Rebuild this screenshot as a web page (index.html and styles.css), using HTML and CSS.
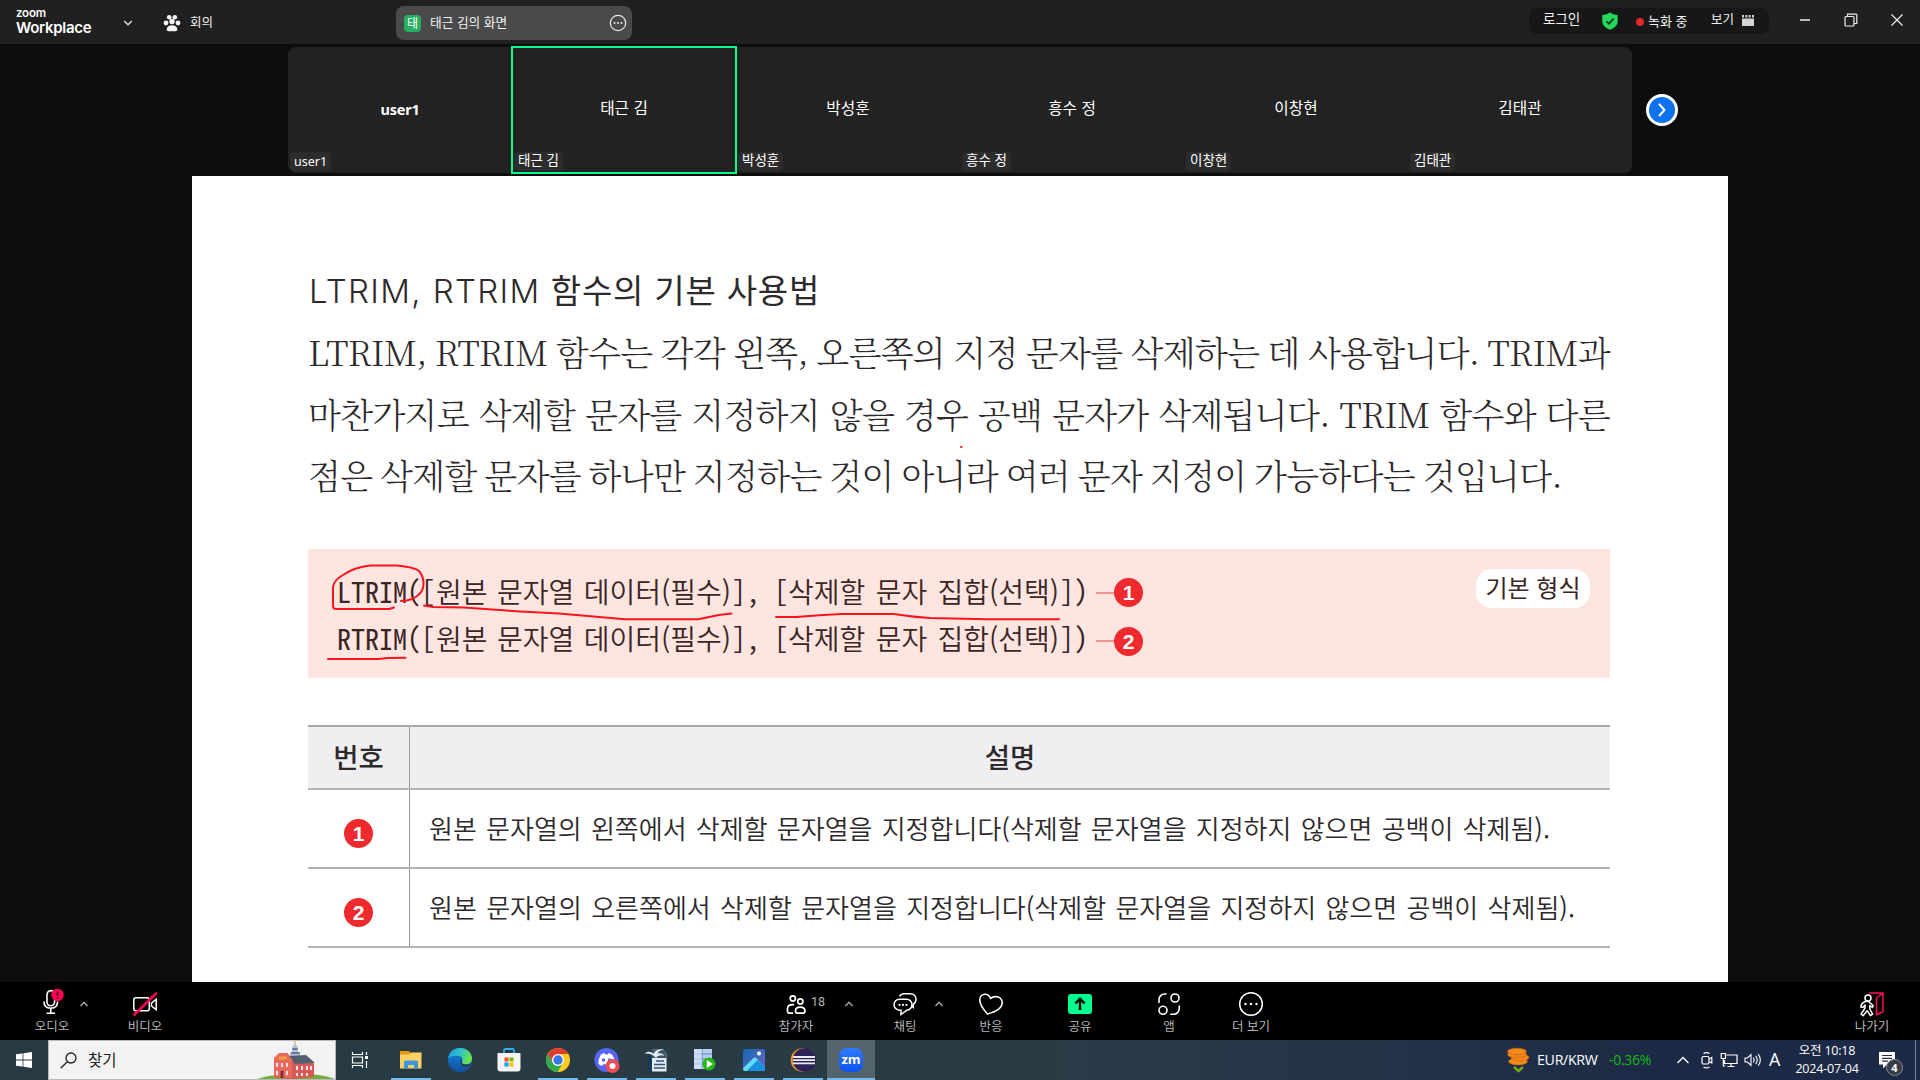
FILE: index.html
```html
<!DOCTYPE html>
<html lang="ko">
<head>
<meta charset="utf-8">
<title>Zoom Workplace</title>
<link rel="stylesheet" href="styles.css">
</head>
<body>
<div class="app">
  <header class="topbar">
    <div class="brand"><span class="brand-zoom">zoom</span><span class="brand-name">Workplace</span></div>
    <svg class="brand-caret" width="10" height="8" viewBox="0 0 10 8"><path d="M1.2 2l3.8 3.8L8.800 2" fill="none" stroke="#e4e4e4" stroke-width="1.4"/></svg>
    <svg class="paw" width="18" height="18" viewBox="0 0 18 18" fill="#f4f4f4"><circle cx="6.200" cy="3.200" r="2.300"/><circle cx="11.800" cy="3.200" r="2.300"/><circle cx="3" cy="9" r="2.400"/><circle cx="15" cy="9" r="2.400"/><circle cx="9" cy="7.500" r="2.700"/><path d="M3.700 15.500c0-2.500 2-4.300 5.300-4.300s5.300 1.800 5.300 4.300c0 1.200-.8 1.700-1.800 1.700h-7c-1 0-1.800-.5-1.800-1.700z"/></svg>
    <span class="top-label meeting">회의</span>
    <div class="share-tab">
      <span class="share-badge">태</span>
      <span class="top-label">태근 김의 화면</span>
      <svg class="share-more" width="18" height="18" viewBox="0 0 18 18"><circle cx="9" cy="9" r="7.700" fill="none" stroke="#e8e8e8" stroke-width="1.200"/><g fill="#e8e8e8"><circle cx="5.500" cy="9" r="1"/><circle cx="9" cy="9" r="1"/><circle cx="12.500" cy="9" r="1"/></g></svg>
    </div>
    <div class="status">
      <span class="top-label login">로그인</span>
      <svg class="shield" width="16" height="18" viewBox="0 0 16 18"><path d="M8 .3c2 1.800 4.600 2.500 7.700 2.700v6c0 4.300-3 7-7.700 8.700C3.300 16 .3 13.300.3 9V3C3.400 2.800 6 2.100 8 .3z" fill="#23d959"/><path d="M4.500 9.300l2.500 2.400 4.600-5" fill="none" stroke="#12331c" stroke-width="1.700"/></svg>
      <span class="rec-dot"></span>
      <span class="top-label rec">녹화 중</span>
      <span class="top-label view">보기</span>
      <svg class="view-icon" width="12" height="12" viewBox="0 0 12 12" fill="#d4d4d4"><path d="M0 0h2v2.500H0zM3.300 0h2v2.500H3.300zM6.600 0h2v2.500H6.600zM10 0h2v2.500H10zM0 3.500h12V11H0z"/></svg>
    </div>
    <div class="win">
      <svg width="12" height="14" viewBox="0 0 12 14"><path d="M1 7h10" stroke="#bbb" stroke-width="2"/></svg>
      <svg width="14" height="14" viewBox="0 0 14 14" fill="none" stroke="#eee" stroke-width="1.200"><rect x="1" y="3.500" width="9" height="9.500" rx="1"/><path d="M3.500 3.500V1.200H12a.8.800 0 0 1 .8.800v8.500H10"/></svg>
      <svg width="14" height="14" viewBox="0 0 14 14"><path d="M1.500 1.500l11 11M12.500 1.500l-11 11" stroke="#eee" stroke-width="1.200"/></svg>
    </div>
  </header>

  <section class="stage">
    <div class="gallery">
      <div class="tile"><b class="name latin">user1</b><span class="tag latin-tag">user1</span></div>
      <div class="tile active"><b class="name">태근 김</b><span class="tag">태근 김</span></div>
      <div class="tile"><b class="name">박성훈</b><span class="tag">박성훈</span></div>
      <div class="tile"><b class="name">흥수 정</b><span class="tag">흥수 정</span></div>
      <div class="tile"><b class="name">이창현</b><span class="tag">이창현</span></div>
      <div class="tile"><b class="name">김태관</b><span class="tag">김태관</span></div>
    </div>
    <div class="next"><svg width="12" height="20" viewBox="0 0 12 20"><path d="M3 4l5.500 6L3 16" fill="none" stroke="#fff" stroke-width="2"/></svg></div>
  </section>

  <main class="slide">
    <h1 class="title"><span class="thin">LTRIM, RTRIM</span> 함수의 기본 사용법</h1>
    <div class="para">
      <p>LTRIM, RTRIM 함수는 각각 왼쪽, 오른쪽의 지정 문자를 삭제하는 데 사용합니다. TRIM과</p>
      <p>마찬가지로 삭제할 문자를 지정하지 않을 경우 공백 문자가 삭제됩니다. TRIM 함수와 다른</p>
      <p class="short">점은 삭제할 문자를 하나만 지정하는 것이 아니라 여러 문자 지정이 가능하다는 것입니다.</p>
    </div>
    <div class="syntax">
      <div class="lines">
        <div class="code"><span class="mono fn">LTRIM</span><span class="mono">([</span><span class="arg first">원본 문자열 데이터(필수)</span><span class="mono sep">], [</span><span class="arg second">삭제할 문자 집합(선택)</span><span class="mono">])</span><i class="dash"></i><span class="num">1</span></div>
        <div class="code lower"><span class="mono fn">RTRIM</span><span class="mono">([</span><span class="arg first">원본 문자열 데이터(필수)</span><span class="mono sep">], [</span><span class="arg second">삭제할 문자 집합(선택)</span><span class="mono">])</span><i class="dash"></i><span class="num">2</span></div>
      </div>
      <span class="form">기본 형식</span>
    </div>
    <div class="table">
      <div class="row head"><div class="c1">번호</div><div class="c2">설명</div></div>
      <div class="row"><div class="c1"><span class="num">1</span></div><div class="c2"><p class="desc1">원본 문자열의 왼쪽에서 삭제할 문자열을 지정합니다(삭제할 문자열을 지정하지 않으면 공백이 삭제됨).</p></div></div>
      <div class="row"><div class="c1"><span class="num">2</span></div><div class="c2"><p class="desc2">원본 문자열의 오른쪽에서 삭제할 문자열을 지정합니다(삭제할 문자열을 지정하지 않으면 공백이 삭제됨).</p></div></div>
    </div>
    <svg class="ink" width="1536" height="806" viewBox="192 176 1536 806" fill="none" stroke="#fb1420" stroke-width="2" stroke-linecap="round" stroke-linejoin="round">
      <path d="M394 607.500L389 609H336Q333 609 333 606V587Q334 580 343 575Q355 567 370 565.500H397Q414 567 419 571Q424 577 423.500 585Q423 594 412 599Q407 601 401 601"/>
      <path d="M424 605.500L433 607L464 607.500L520 611.500L559 613.500L625 619.300H698L719 615L731.500 613.500"/>
      <path d="M776 617H796Q820 615 841 614H894Q912 617 930 618L987 619.300H1059"/>
      <path d="M328 659H378L388 658L405.500 657.700"/>
      <path d="M961 447h.5"/>
    </svg>
  </main>

  <nav class="toolbar">
    <div class="tool audio"><svg width="28" height="28" viewBox="0 0 28 28"><g fill="none" stroke="#fff" stroke-width="1.600"><path d="M15 4.500a3.700 3.700 0 0 0-6 2.500v8a3.800 3.800 0 0 0 7.600 0v-2.500M6 14.500c0 4.300 2.800 6.700 6.800 6.700s6.800-2.400 6.800-6.700M12.800 21v5M8.500 26.200h8.600"/></g><circle cx="19.500" cy="8" r="6.200" fill="#ff0055"/><path d="M19.500 4.500v4.300M19.500 10.300v1.500" stroke="#33000f" stroke-width="1.700"/></svg><span>오디오</span></div>
    <svg class="caret c-audio" width="16" height="10" viewBox="0 0 16 10"><path d="M4.500 7L8 3.300 11.500 7" fill="none" stroke="#a5a5a5" stroke-width="1.500"/></svg>
    <div class="tool video"><svg width="28" height="28" viewBox="0 0 28 28"><g fill="none" stroke="#fff" stroke-width="1.500"><rect x="2.800" y="7.800" width="15.500" height="13" rx="2"/><path d="M20.500 13l4.700-3.700v10.500L20.500 16z"/></g><path d="M3.500 24.500L25 3.500" stroke="#ff0055" stroke-width="2.600" stroke-linecap="round"/></svg><span>비디오</span></div>
    <div class="tool people"><svg width="28" height="28" viewBox="0 0 28 28" fill="none" stroke="#fff" stroke-width="1.700"><circle cx="10.800" cy="8.500" r="2.600"/><circle cx="18.300" cy="11.500" r="2.600"/><path d="M11 23.200H7c-1 0-1.500-.6-1.500-1.600v-3c0-2.400 1.800-4 5.200-4h1.500M13.500 21c0-2.500 1.800-3.800 4.700-3.800s4.700 1.300 4.700 3.800c0 1.400-.6 2.200-1.800 2.200h-5.800c-1.200 0-1.800-.8-1.800-2.200z"/></svg><span>참가자</span><em>18</em></div>
    <svg class="caret c-people" width="16" height="10" viewBox="0 0 16 10"><path d="M4.500 7L8 3.300 11.500 7" fill="none" stroke="#a5a5a5" stroke-width="1.500"/></svg>
    <div class="tool chat"><svg width="28" height="28" viewBox="0 0 28 28" fill="none" stroke="#fff" stroke-width="1.500"><path d="M8.500 6.500c1-1.800 2.500-2.800 4.500-2.800h6.500c3 0 5.500 2.500 5.500 5.500 0 2.500-1 3.800-2.700 4.900v3.400l-1.800-1.500"/><path d="M8.500 9.200h6.800a5.500 5.500 0 0 1 .4 11L10 24.500v-4.300H8.500a5.500 5.500 0 0 1 0-11z"/><path d="M7.500 14.800h2M11 14.800h2M14.500 14.800h2" stroke-width="1.800"/></svg><span>채팅</span></div>
    <svg class="caret c-chat" width="16" height="10" viewBox="0 0 16 10"><path d="M4.500 7L8 3.300 11.500 7" fill="none" stroke="#a5a5a5" stroke-width="1.500"/></svg>
    <div class="tool react"><svg width="28" height="28" viewBox="0 0 28 28" fill="none" stroke="#fff" stroke-width="1.600" stroke-linejoin="round"><path d="M10.500 24C5.500 18.500 2.800 14.500 2.800 10c0-3.500 2.200-5.800 5.200-5.800 2.700 0 4.600 1.500 5.500 4.200 1.500-1.300 3.200-1.800 5-1.800 4 0 6.700 2.500 6.700 6 0 6-6.200 9.200-14.700 11.400z"/></svg><span>반응</span></div>
    <div class="tool share"><svg width="28" height="28" viewBox="0 0 28 28"><rect x="2" y="4" width="24" height="20" rx="3" fill="#00ff8c"/><path d="M14 20V9M9.300 13.500L14 8.800l4.700 4.700" fill="none" stroke="#000" stroke-width="2.400"/></svg><span>공유</span></div>
    <div class="tool apps"><svg width="28" height="28" viewBox="0 0 28 28" fill="none" stroke="#fff" stroke-width="1.600"><circle cx="20" cy="8" r="4"/><circle cx="8" cy="20.300" r="4"/><path d="M11.500 4H9.500a5.500 5.500 0 0 0-5.500 5.500V13M24.200 15.500v3.300a5.500 5.500 0 0 1-5.500 5.500h-3.500"/></svg><span>앱</span></div>
    <div class="tool more"><svg width="28" height="28" viewBox="0 0 28 28"><circle cx="14" cy="14" r="11.300" fill="none" stroke="#fff" stroke-width="1.500"/><g fill="#fff"><circle cx="8.500" cy="14" r="1.200"/><circle cx="14" cy="14" r="1.200"/><circle cx="19.500" cy="14" r="1.200"/></g></svg><span>더 보기</span></div>
    <div class="tool exit"><svg width="28" height="28" viewBox="0 0 28 28" fill="none" stroke-linejoin="round"><path d="M11 3h14.500M18.500 8l6.500-5v18.500l-6.500 3.500z" stroke="#ff0a58" stroke-width="1.500"/><g stroke="#fff" stroke-width="1.500"><circle cx="10" cy="8" r="3"/><path d="M7 11.500c-2 1-4 3-4.200 5.500l2.300.3 2-2.300-.3 3.500-3.800 5.500 2 1.700 4.200-5 3.200 5 2.200-1.500-2.800-5.200v-3.500l2.500 2 1-1.800-3-2.700c-1-1.500-3-2.300-5.300-1.500z"/></g></svg><span>나가기</span></div>
  </nav>

  <footer class="taskbar">
    <div class="start"><svg width="16" height="16" viewBox="0 0 16 16" fill="#fff"><path d="M0 2.300l6.600-.9v6.200H0zM7.400 1.300L16 0v7.600H7.400zM0 8.400h6.600v6.200L0 13.700zM7.400 8.400H16V16l-8.600-1.200z"/></svg></div>
    <div class="search">
      <svg width="17" height="17" viewBox="0 0 17 17" fill="none" stroke="#222" stroke-width="1.300"><circle cx="11" cy="6" r="5"/><path d="M7.300 9.700L.7 16.200"/></svg>
      <span>찾기</span>
      <svg class="hall" width="78" height="38" viewBox="0 0 78 38"><path d="M0 38C12 34 24 33 40 33s28 1 38 5z" fill="#76ad3e"/><path d="M33 18V12h2V7l3-5 3 5v5h2v6z" fill="#aebed3"/><path d="M35.500 8h5M34 12h9" stroke="#53637c" stroke-width="1.500"/><path d="M38 0v3" stroke="#d4aa3b"/><path d="M18 17l5-5h7l4 4 20 3 3 4v13l-22 2-17-1z" fill="#d95a55"/><path d="M32 15l17-1 9 8-20 1z" fill="#555d70"/><path d="M17 17l5-5h7l6 6v19l-18-1z" fill="#e96a5d"/><path d="M22 17h8" stroke="#f0a243" stroke-width="3"/><path d="M20 22v4M25 22v4M30 22v4M20 30v4M30 30v4M40 25v4M45 25v4M50 25v4M54 25v4M40 32v3M45 32v3M50 32v3" stroke="#e9e3e8" stroke-width="2"/><path d="M25 30v7" stroke="#7c2f35" stroke-width="3"/></svg>
    </div>
    <div class="app-cell taskview"><svg width="18" height="18" viewBox="0 0 18 18" fill="none" stroke="#fff" stroke-width="1.200"><path d="M1.500 1v2.500h10V1M1.500 17v-2.500h10V17M1.500 6h10v6h-10zM15.500 1v3M15.500 10v7"/><path d="M15.500 5v3" stroke-width="3"/></svg></div>
    <div class="app-cell open"><svg width="24" height="24" viewBox="0 0 24 24"><path d="M1 3h9l1.500 2H22v15H1z" fill="#e19a08"/><path d="M1 6.500h9L12 4.500h10.500V20.500H1z" fill="#fdd063"/><path d="M5 20.500V14a1.500 1.500 0 0 1 1.500-1.500h11A1.500 1.500 0 0 1 19 14v6.500h-4V17H9v3.500z" fill="#3b97dc"/></svg></div>
    <div class="app-cell"><svg width="26" height="26" viewBox="0 0 26 26"><defs><linearGradient id="eg" x1="0" y1="0" x2="1" y2=".3"><stop offset="0" stop-color="#1b9de2"/><stop offset=".55" stop-color="#30c5c8"/><stop offset="1" stop-color="#66e34b"/></linearGradient><linearGradient id="eb" x1="0" y1="0" x2="0" y2="1"><stop offset="0" stop-color="#1787d8"/><stop offset="1" stop-color="#0c50a0"/></linearGradient></defs><circle cx="13" cy="13" r="12" fill="url(#eb)"/><path d="M1.200 11.500C2 5 7 1 13 1c7 0 12 4.800 12 10.500 0 3.800-2.700 6-6 6-3 0-4.700-1.200-4.200-2.300 1.700-2.500.5-5.700-3-6.200-4-.5-8.500 0-10.600 2.500z" fill="url(#eg)"/><path d="M14.800 15.200c-.5 1.100 1.200 2.300 4.200 2.300 1.800 0 3.300-.5 4.400-1.500-.3 1.500-.9 2.600-1.700 3.600-3.200.8-7.200-.2-8.200-3.400-.5-1.800 0-3.200 1-3.700.5.800.6 1.800.3 2.700z" fill="#283a48"/></svg></div>
    <div class="app-cell"><svg width="26" height="26" viewBox="0 0 26 26"><path d="M8 7V3.200C8 2.500 8.500 2 9.200 2h7.600c.7 0 1.200.5 1.200 1.200V7" fill="none" stroke="#27b1e8" stroke-width="1.800"/><path d="M1.500 6h23v15.500a3 3 0 0 1-3 3h-17a3 3 0 0 1-3-3z" fill="#f4f4f4"/><path fill="#f25022" d="M8.500 10.500h4v4h-4z"/><path fill="#7fba00" d="M13.500 10.500h4v4h-4z"/><path fill="#00a4ef" d="M8.500 15.500h4v4h-4z"/><path fill="#ffb900" d="M13.500 15.500h4v4h-4z"/></svg></div>
    <div class="app-cell open"><svg width="26" height="26" viewBox="0 0 26 26"><circle cx="13" cy="13" r="12" fill="#fdca20"/><path d="M2.600 7A12 12 0 0 1 23.400 7H13l-5.200 9z" fill="#e33b2e"/><path d="M2.600 7A12 12 0 0 0 12.500 25l5.700-9.500-5.200 3.500-5.200-3z" fill="#2da94f"/><circle cx="13" cy="13" r="6" fill="#fff"/><circle cx="13" cy="13" r="4.700" fill="#3478e5"/></svg></div>
    <div class="app-cell open"><svg width="26" height="26" viewBox="0 0 26 26"><circle cx="12.500" cy="13" r="12" fill="#5865f2"/><path d="M7 7.500c2-1 3-1.200 3.700-1.200l.6 1.200h2.500l.6-1.200c1 0 2 .3 3.600 1.200 2 3 2.800 6 2.500 9.500-1.500 1.200-2.800 1.700-3.700 1.800l-1-1.600H9.300l-1 1.600c-1-.1-2.500-.7-3.800-1.800-.3-3.500.7-6.700 2.500-9.500z" fill="#fff"/><circle cx="9.500" cy="13" r="1.700" fill="#5865f2"/><circle cx="15.500" cy="13" r="1.700" fill="#5865f2"/><circle cx="18.500" cy="19" r="7" fill="#ef4b50"/><circle cx="18.500" cy="19" r="3" fill="#fff"/></svg></div>
    <div class="app-cell open"><svg width="26" height="26" viewBox="0 0 26 26"><path d="M5 8h7v16H5z" fill="#163a57"/><path d="M9 2.500h11l3.500 4v18H9z" fill="#e4ebf1"/><path d="M9 2.500h11l3.500 4V11H9z" fill="#39556b"/><path d="M13 14h8M11 17.500h11M11 21h11" stroke="#2f5678" stroke-width="1.700"/><path d="M1.500 6.500C5 4 8 4.500 10.500 7 12 3.500 16 1.500 21 2.500c-3.500.5-5.500 2-6.500 4 3-.8 5.500 0 7 2.500-3-1.300-6.500-.8-8.500 2C11 8 6.500 6 1.500 6.500z" fill="#e5edf2"/></svg></div>
    <div class="app-cell open"><svg width="26" height="26" viewBox="0 0 26 26"><path d="M2 2h18v20H2z" fill="#b9cff0"/><path d="M2 7h18M2 12h18M2 17h18M10 2v20" stroke="#5c83bd" stroke-width="1"/><path d="M2 2h8v20H2z" fill="#dce8f9" opacity=".6"/><circle cx="17" cy="17" r="6.500" fill="#25b814"/><path d="M14.800 13l6.200 4-6.200 4z" fill="#fff"/></svg></div>
    <div class="app-cell open"><svg width="26" height="26" viewBox="0 0 26 26"><defs><linearGradient id="ph" x1="0" y1="0" x2="1" y2="1"><stop offset="0" stop-color="#1567b3"/><stop offset=".6" stop-color="#4b67bd"/><stop offset="1" stop-color="#8e52c2"/></linearGradient></defs><rect x="2" y="2" width="22" height="22" rx="2" fill="url(#ph)"/><path d="M2 21.500L12 11.500c1.200-1.200 2.600-1.200 3.800 0L24 20v2a2 2 0 0 1-2 2H4a2 2 0 0 1-2-2z" fill="#62dcf5"/><path d="M5.500 24L17 12.700l7 7.300v2a2 2 0 0 1-2 2z" fill="#1b8fe0"/><circle cx="18" cy="6.500" r="2" fill="#fff"/></svg></div>
    <div class="app-cell open"><svg width="26" height="26" viewBox="0 0 26 26"><circle cx="12.500" cy="13" r="11.800" fill="#f39a24"/><circle cx="14.500" cy="13" r="11.800" fill="#2f2259"/><path d="M3 10h22M3 13.200h22M3 16.400h22" stroke="#eeecf4" stroke-width="1.800"/></svg></div>
    <div class="app-cell open current"><span class="zm">zm</span></div>
    <div class="tray">
      <svg class="coins" width="24" height="26" viewBox="0 0 24 26"><g fill="#f28a1c" stroke="#c65f0a" stroke-width=".6"><ellipse cx="12" cy="14.500" rx="9.500" ry="3.500"/><ellipse cx="14" cy="10.500" rx="9" ry="3.500"/><ellipse cx="11" cy="7.500" rx="9.500" ry="3.300"/><ellipse cx="11" cy="4.500" rx="9.500" ry="3.300"/></g><path d="M8 20l4.500 4 4.500-4" fill="none" stroke="#72a814" stroke-width="2.600"/></svg>
      <span class="pair">EUR/KRW</span><span class="delta">-0.36%</span>
      <svg class="t-up" width="14" height="10" viewBox="0 0 14 10"><path d="M1.500 8L7 2.500 12.500 8" fill="none" stroke="#fff" stroke-width="1.300"/></svg>
      <svg class="t-cam" width="14" height="18" viewBox="0 0 14 18" fill="none" stroke="#fff" stroke-width="1.200"><rect x="2" y="5.500" width="7" height="7.500" rx="1.500"/><path d="M9 8l2.800-1.500v5.500L9 10.500M3.500 2.500c2-1.300 4-1.300 6 0M3.500 16c2 1.300 4 1.300 6 0"/></svg>
      <svg class="t-net" width="18" height="16" viewBox="0 0 18 16" fill="none" stroke="#fff" stroke-width="1.200"><path d="M6.500 3H17v8.500H4.500V8M11 11.500v3M7.500 14.500h7M1.200 1.500h4.300v5H1.200zM3.300 6.500v7.500h2"/></svg>
      <svg class="t-vol" width="18" height="16" viewBox="0 0 18 16" fill="none" stroke="#fff" stroke-width="1.100"><path d="M1 6h2.500L7 2.500v11L3.500 10H1zM9.300 5.500c1 1.500 1 3.500 0 5M11.700 3.800c1.800 2.500 1.800 6 0 8.400M14.200 2.200c2.600 3.500 2.600 8 0 11.600"/></svg>
      <span class="ime">A</span>
      <div class="clock"><span>오전 10:18</span><span>2024-07-04</span></div>
      <div class="notif"><svg width="16" height="17" viewBox="0 0 16 17"><path d="M0 0h16v12.500H8L4 16.500v-4H0z" fill="#fff"/><path d="M3 3.500h10M3 6.300h10M3 9.100h6" stroke="#22304a" stroke-width="1.200"/></svg><span>4</span></div>
      <i class="peek"></i>
    </div>
  </footer>
</div>
</body>
</html>
```
FILE: styles.css
```css
* { box-sizing: border-box; }
body { margin: 0; background: #0d0d0d; font-family: "Noto Sans CJK KR", sans-serif; overflow: hidden; }
p, h1 { margin: 0; }
svg { display: block; flex: none; }
.app { width: 1920px; height: 1080px; display: flex; flex-direction: column; }

/* title bar */
.topbar { height: 44px; flex: none; background: #202020; color: #f2f2f2; display: flex; align-items: flex-start; }
.brand { width: 112px; padding-left: 16px; height: 44px; font-family: Inter, sans-serif; color: #fff; display: flex; flex-direction: column; }
.brand-zoom { font-size: 11.500px; line-height: 14px; margin-top: 6px; font-weight: 600; letter-spacing: -.2px; }
.brand-name { font-size: 15px; line-height: 18px; margin-top: -1px; font-weight: 600; letter-spacing: -.3px; }
.brand-caret { margin: 19px 0 0 11px; }
.paw { margin: 14px 0 0 30px; }
.top-label { font-size: 12.500px; line-height: 18px; white-space: nowrap; }
.meeting { margin: 13px 0 0 9px; width: 25px; }
.share-tab { margin: 6px 0 0 181px; width: 236px; height: 34px; border-radius: 8px; background: #4a4a4a; display: flex; align-items: center; padding: 0 5px 0 8px; }
.share-badge { width: 17px; height: 17px; border-radius: 4px; background: #27ae60; color: #fff; font-size: 12px; line-height: 15px; text-align: center; margin-right: 9px; }
.share-tab .top-label { margin-top: -3px; font-size: 12.700px; }
.share-more { margin-left: auto; }
.status { margin: 8px 0 0 897px; width: 240px; height: 26px; border-radius: 8px; background: #171717; display: flex; align-items: flex-start; }
.login { margin: 1px 0 0 14px; width: 39px; font-size: 13.500px; }
.shield { margin: 4px 0 0 20px; }
.rec-dot { width: 8px; height: 8px; border-radius: 50%; background: #e02828; margin: 10px 0 0 18px; }
.rec { margin: 4px 0 0 4px; width: 40px; font-size: 13px; }
.view { margin: 2px 0 0 23px; width: 24px; }
.view-icon { margin: 7px 0 0 7px; }
.win { display: flex; gap: 33px; margin: 13px 0 0 30px; }
.win svg:last-child { margin-left: -1px; }

/* participants */
.stage { height: 132px; flex: none; padding: 3px 0 0 288px; display: flex; align-items: flex-start; }
.gallery { width: 1344px; height: 126px; border-radius: 8px; background: #222; display: grid; grid-template-columns: repeat(6, 224px); color: #fff; }
.tile { position: relative; display: flex; align-items: center; justify-content: center; }
.tile.active { margin: -1px; outline: 2px solid #00ff8c; outline-offset: -2px; }
.name { font-size: 15.700px; line-height: 20px; font-weight: 400; margin: -5px 0 0 0; }
.name.latin { font-family: "Noto Sans", sans-serif; font-weight: 700; font-size: 14.500px; margin: -3px 0 0; letter-spacing: -.2px; }
.tag { position: absolute; left: 2px; bottom: 2px; height: 19px; padding: 0 4px; border-radius: 4px; background: #2c2c2c; font-size: 13.500px; line-height: 15px; white-space: nowrap; }
.active .tag { left: 3px; bottom: 3px; }
.latin-tag { font-family: "Noto Sans", sans-serif; font-size: 12.500px; line-height: 19px; }
.next { width: 32px; height: 32px; margin: 47px 0 0 14px; border: 3px solid #fff; border-radius: 50%; background: #0e72ed; display: flex; align-items: center; justify-content: center; }

/* shared document */
.slide { position: relative; width: 1536px; height: 806px; flex: none; margin-left: 192px; background: #fff; padding: 89px 0 0 116px; color: #2e2a2c; }
.title { width: 511px; font-size: 33px; line-height: 48px; font-weight: 400; letter-spacing: .7px; text-align-last: justify; margin-left: 1px; white-space: nowrap; }
.title .thin { font-family: Inter, sans-serif; font-weight: 300; letter-spacing: 1.300px; }
.para { margin-top: 6px; }
.para p { width: 1302px; height: 61.500px; line-height: 61.500px; font-family: "Noto Serif CJK KR", "Liberation Serif", serif; font-size: 34px; font-weight: 300; letter-spacing: -.65px; word-spacing: -4px; text-align-last: justify; white-space: nowrap; }
.para p.short { width: 1254px; }
.syntax { width: 1302px; height: 129px; margin-top: 43.500px; background: #ffe5e0; display: flex; justify-content: space-between; align-items: flex-start; padding: 19.500px 20px 0 29px; color: #3b2525; }
.code { display: flex; align-items: center; height: 48.500px; font-size: 28px; line-height: 48px; white-space: pre; }
.mono, .arg { margin-bottom: 4px; }
.lower .mono, .lower .arg { margin-bottom: 7px; }
.mono { font-family: "Noto Sans Mono CJK KR", "Liberation Mono", monospace; font-size: 28px; }
.fn { font-weight: 500; }
.arg { font-weight: 350; text-align-last: justify; white-space: nowrap; }
.first { width: 295px; margin-left: 1px; margin-right: 1px; }
.second { width: 271px; margin-right: 1px; }
.dash { width: 18px; height: 2px; background: #ea9792; margin-left: 8px; }
.num { width: 29px; height: 29px; border-radius: 50%; background: #ee2a2e; color: #fff; font: 700 21px/29px "Liberation Sans", sans-serif; text-align: center; flex: none; }
.form { width: 114px; height: 39px; border-radius: 16px; background: #fff; font-size: 24px; line-height: 36px; text-align: center; white-space: nowrap; }
.table { width: 1302px; margin-top: 47px; border-top: 2px solid #aaa9ab; }
.row { display: grid; grid-template-columns: 102px 1fr; height: 79px; border-bottom: 2px solid #b4b3b5; }
.row.head { height: 63px; background: #efeef0; font-size: 27.500px; font-weight: 500; text-align: center; line-height: 59px; }
.head .c1 { padding-bottom: 2px; }
.c1 { border-right: 1px solid #99989a; display: flex; align-items: center; justify-content: center; }
.row:not(.head) .c1 { padding-top: 10px; }
.c2 p { margin-left: 19px; font-size: 26px; line-height: 76px; font-weight: 350; text-align-last: justify; white-space: nowrap; }
.desc1 { width: 1121px; }
.desc2 { width: 1146px; }
.ink { position: absolute; left: 0; top: 0; }

/* meeting controls */
.toolbar { height: 58px; flex: none; background: #000; display: flex; align-items: flex-start; padding-left: 32px; }
.tool { position: relative; width: 40px; display: flex; flex-direction: column; align-items: center; padding-top: 8px; color: #b4b4b4; }
.tool span { font-size: 12.500px; line-height: 18px; margin-top: -1px; white-space: nowrap; }
.tool.audio svg { margin: -3px 0 3px; }
.tool em { position: absolute; left: 35px; top: 11px; font: 12.500px/18px Roboto, sans-serif; }
.caret { margin-top: 17px; }
.c-audio { margin-left: 4px; }
.video { margin-left: 33px; }
.people { margin-left: 611px; }
.c-people { margin-left: 25px; }
.chat { margin-left: 28px; }
.c-chat { margin-left: 6px; }
.react { margin-left: 24px; }
.share { margin-left: 49px; }
.apps { margin-left: 49px; }
.more { margin-left: 42px; }
.exit { margin-left: auto; margin-right: 28px; }

/* Windows task bar */
.taskbar { height: 40px; flex: none; display: flex; background: linear-gradient(90deg, #273a43 0, #293c46 55%, #243348 72%, #1b2945 88%, #1c2a47 100%); color: #fff; }
.start { width: 48px; display: flex; align-items: center; justify-content: center; }
.search { width: 288px; background: #f2f2f2; border: 1px solid #b9b9b9; display: flex; align-items: center; padding-left: 11px; color: #222; font-size: 15.500px; }
.search span { margin-left: 11px; line-height: 34px; margin-top: -3px; }
.hall { margin-left: auto; }
.app-cell { width: 49px; display: flex; align-items: center; justify-content: center; flex: none; }
.taskview { width: 50px; padding-right: 2px; }
.open { background: linear-gradient(#76b9ed, #76b9ed) center bottom / 40px 2px no-repeat; }
.current { background: linear-gradient(#76b9ed, #76b9ed) left bottom / 100% 2px no-repeat, #54646c; width: 48px; }
.zm { width: 24px; height: 24px; border-radius: 8px; background: linear-gradient(#2e7bff, #0b52ee); font: 700 13px/22px "Open Sans", sans-serif; text-align: center; }
.tray { margin-left: auto; display: flex; align-items: center; font-family: "Open Sans", "Noto Sans CJK KR", sans-serif; }
.coins { margin-left: -2px; }
.pair { font-size: 14.200px; margin-left: 7px; width: 72px; letter-spacing: -.3px; margin-top: -2px; }
.delta { font-size: 14px; width: 67px; color: #18b818; letter-spacing: -.3px; margin-top: -2px; }
.t-cam { margin-left: 10px; }
.t-net { margin-left: 6px; }
.t-vol { margin-left: 6px; }
.ime { font-size: 18px; margin: -2px 0 0 7px; width: 20px; }
.clock { width: 76px; display: flex; flex-direction: column; align-items: center; font-size: 12.500px; line-height: 18px; white-space: nowrap; letter-spacing: -.2px; margin-top: -1px; }
.notif { position: relative; margin: 0 20px 0 14px; }
.notif span { position: absolute; left: 7px; top: 7px; width: 17px; height: 17px; border-radius: 50%; background: #363c46; border: 1px solid #858990; font: 700 11px/15px "Open Sans", sans-serif; text-align: center; }
.peek { width: 1px; height: 40px; background: #77839a; margin-right: 4px; }
```
